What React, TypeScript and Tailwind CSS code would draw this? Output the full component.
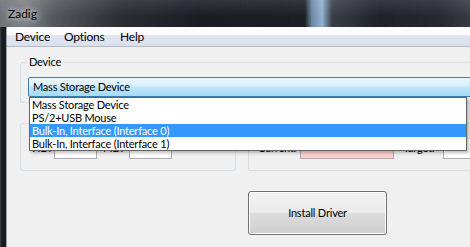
import React from 'react';

const items = [
  'Mass Storage Device',
  'PS/2+USB Mouse',
  'Bulk-In, Interface (Interface 0)',
  'Bulk-In, Interface (Interface 1)',
];

function MenuBar() {
  return (
    <div className="h-[20px] flex items-center pl-[8px] text-[12px] border-t border-t-[#fbfbfd] border-b border-b-[#b6bac4] bg-[linear-gradient(180deg,#fdfdff_0%,#fbfbfe_38%,#e0e4f1_42%,#dbe0ee_100%)]">
      <span className="w-[49px]">Device</span>
      <span className="w-[56px]">Options</span>
      <span>Help</span>
    </div>
  );
}

function TextBox({ width, tint }: { width: string; tint?: boolean }) {
  return (
    <div
      className={`h-[21px] shrink-0 ${width} border border-[#abadb3] border-t-[#e3e9ef] ${tint ? 'bg-[#ffcfcf]' : 'bg-white'}`}
    />
  );
}

export default function App() {
  return (
    <div className="relative w-[470px] h-[247px] overflow-hidden bg-[#f0f0f0] font-['Lato',sans-serif] text-[11px] tracking-[-0.2px] text-black">
      <div className="h-[27px] flex items-center pl-[8px] bg-[linear-gradient(180deg,rgba(255,255,255,0.1),rgba(0,0,0,0)_60%),linear-gradient(90deg,#6f7378_0px,#7c8085_25px,#53575c_55px,#2a2e33_120px,#1a1e24_200px,#1c2026_305px,#6f88a3_312px,#92b2d2_322px,#3a3f46_332px,#1f2329_380px,#262a30_440px,#383c42_470px)]">
        <span className="text-[12px] tracking-normal leading-none [text-shadow:0_0_5px_#d8dce0,0_0_8px_#c8ccd0]">Zadig</span>
      </div>

      <div className="flex h-[220px]">
        <div className="w-[6px] shrink-0 bg-[linear-gradient(90deg,#3c4045,#15191d_40%,#1c2024)]" />
        <div className="w-[1px] shrink-0 bg-[#9ca0a5]" />
        <div className="flex-1 min-w-0 flex flex-col">
          <MenuBar />

          <div className="pl-[13px]">
            <div className="relative mt-[15px] w-[470px] h-[41px] border border-[#d5dfe5] rounded-[3px] pl-[7px] pt-[14px]">
              <span className="absolute -top-[9px] left-[6px] px-[2px] bg-[#f0f0f0] leading-[16px]">Device</span>
              <div className="h-[20px] border border-[#3c7fb1] rounded-[2px] flex items-center pl-[4px] bg-[linear-gradient(180deg,#eaf6fd_0%,#d9f0fc_45%,#bee6fd_50%,#a7d9f5_100%)]">
                Mass Storage Device
              </div>
            </div>

            <div className="mt-[20px] flex gap-[12px]">
              <div className="w-[216px] shrink-0 h-[48px] border border-[#d5dfe5] rounded-[3px] pt-[14px] pl-[9px] flex items-start">
                <span className="w-[24px] shrink-0 leading-[19px]">VID:</span>
                <TextBox width="w-[43px]" />
                <span className="w-[32px] shrink-0 pl-[6px] leading-[19px]">PID:</span>
                <TextBox width="w-[43px]" />
              </div>
              <div className="w-[240px] shrink-0 h-[48px] border border-[#d5dfe5] rounded-[3px] pt-[14px] pl-[9px] flex items-start">
                <span className="w-[42px] shrink-0 leading-[19px]">Current:</span>
                <TextBox width="w-[94px]" tint />
                <span className="w-[40px] shrink-0 ml-[9px] leading-[19px]">Target:</span>
                <TextBox width="w-[60px]" />
              </div>
            </div>

            <button className="mt-[20px] ml-[228px] w-[139px] h-[44px] border border-[#707070] rounded-[3px] bg-[linear-gradient(180deg,#f2f2f2_0%,#ebebeb_50%,#dddddd_50%,#cfcfcf_100%)] shadow-[inset_0_0_0_1px_#fcfcfc]">
              Install Driver
            </button>
          </div>
        </div>
      </div>

      <div className="absolute left-[29px] top-[97px] w-[438px] border border-[#646464] bg-white shadow-[2px_2px_3px_rgba(0,0,0,0.25)]">
        {items.map((t, i) => (
          <div
            key={t}
            className={`h-[13px] leading-[13px] pl-[2px] whitespace-nowrap ${i === 2 ? 'bg-[#3399ff] text-white' : ''}`}
          >
            {t}
          </div>
        ))}
      </div>
    </div>
  );
}
